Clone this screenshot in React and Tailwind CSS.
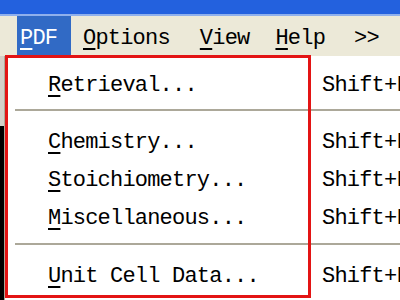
const items = [
  { type: "item", key: "R", rest: "etrieval...", shortcut: "Shift+F1" },
  { type: "sep", cls: "h-[19px] pt-[7px]" },
  { type: "item", key: "C", rest: "hemistry...", shortcut: "Shift+F2" },
  { type: "item", key: "S", rest: "toichiometry...", shortcut: "Shift+F3" },
  { type: "item", key: "M", rest: "iscellaneous...", shortcut: "Shift+F4" },
  { type: "sep", cls: "h-[20px] pt-[8px]" },
  { type: "item", key: "U", rest: "nit Cell Data...", shortcut: "Shift+F5" },
];

const Mn = ({ children }) => (
  <span className="underline decoration-2 underline-offset-[4px]">{children}</span>
);

export default function App() {
  return (
    <div
      className="relative w-[400px] h-[300px] overflow-hidden bg-white text-[22px] tracking-[-0.8px] text-black flex flex-col"
      style={{ fontFamily: '"Liberation Mono", "DejaVu Sans Mono", monospace' }}
    >
      {/* title bar */}
      <div className="h-[14px] bg-[#2361de] shrink-0" />
      <div className="h-[2px] bg-[#8fb0ec] shrink-0" />

      {/* menu bar */}
      <div className="h-[40px] bg-[#ece9d8] flex items-stretch shrink-0 leading-none">
        <div className="ml-[17px] w-[54px] bg-[#316ac5] text-white flex items-center pl-[3px] pt-[5px]">
          <span><Mn>P</Mn>DF</span>
        </div>
        <div className="ml-[12px] flex items-center pt-[5px]"><span><Mn>O</Mn>ptions</span></div>
        <div className="ml-[30px] flex items-center pt-[5px]"><span><Mn>V</Mn>iew</span></div>
        <div className="ml-[26px] flex items-center pt-[5px]"><span><Mn>H</Mn>elp</span></div>
        <div className="ml-[29px] flex items-center pt-[5px]"><span>&gt;&gt;</span></div>
      </div>

      <div className="flex flex-1">
        {/* window behind */}
        <div className="w-[4px] flex flex-col shrink-0">
          <div className="h-[70px] bg-[#d4d0c8]" />
          <div className="flex-1 bg-black" />
        </div>

        {/* dropdown */}
        <div className="flex-1 bg-white border-l border-[#aca899] pt-[8px] leading-none">
          {items.map((it, i) =>
            it.type === "sep" ? (
              <div key={i} className={it.cls}>
                <div className="ml-[10px] h-[2px] bg-[#aca899]" />
              </div>
            ) : (
              <div key={i} className="h-[38px] flex items-center whitespace-nowrap pt-[6px]">
                <span className="pl-[43px] w-[317px] shrink-0">
                  <Mn>{it.key}</Mn>
                  {it.rest}
                </span>
                <span>{it.shortcut}</span>
              </div>
            )
          )}
        </div>
      </div>

      {/* red annotation box */}
      <div className="absolute left-[5px] top-[55px] w-[306px] h-[243px] border-[3px] border-[#e31414]" />
    </div>
  );
}
